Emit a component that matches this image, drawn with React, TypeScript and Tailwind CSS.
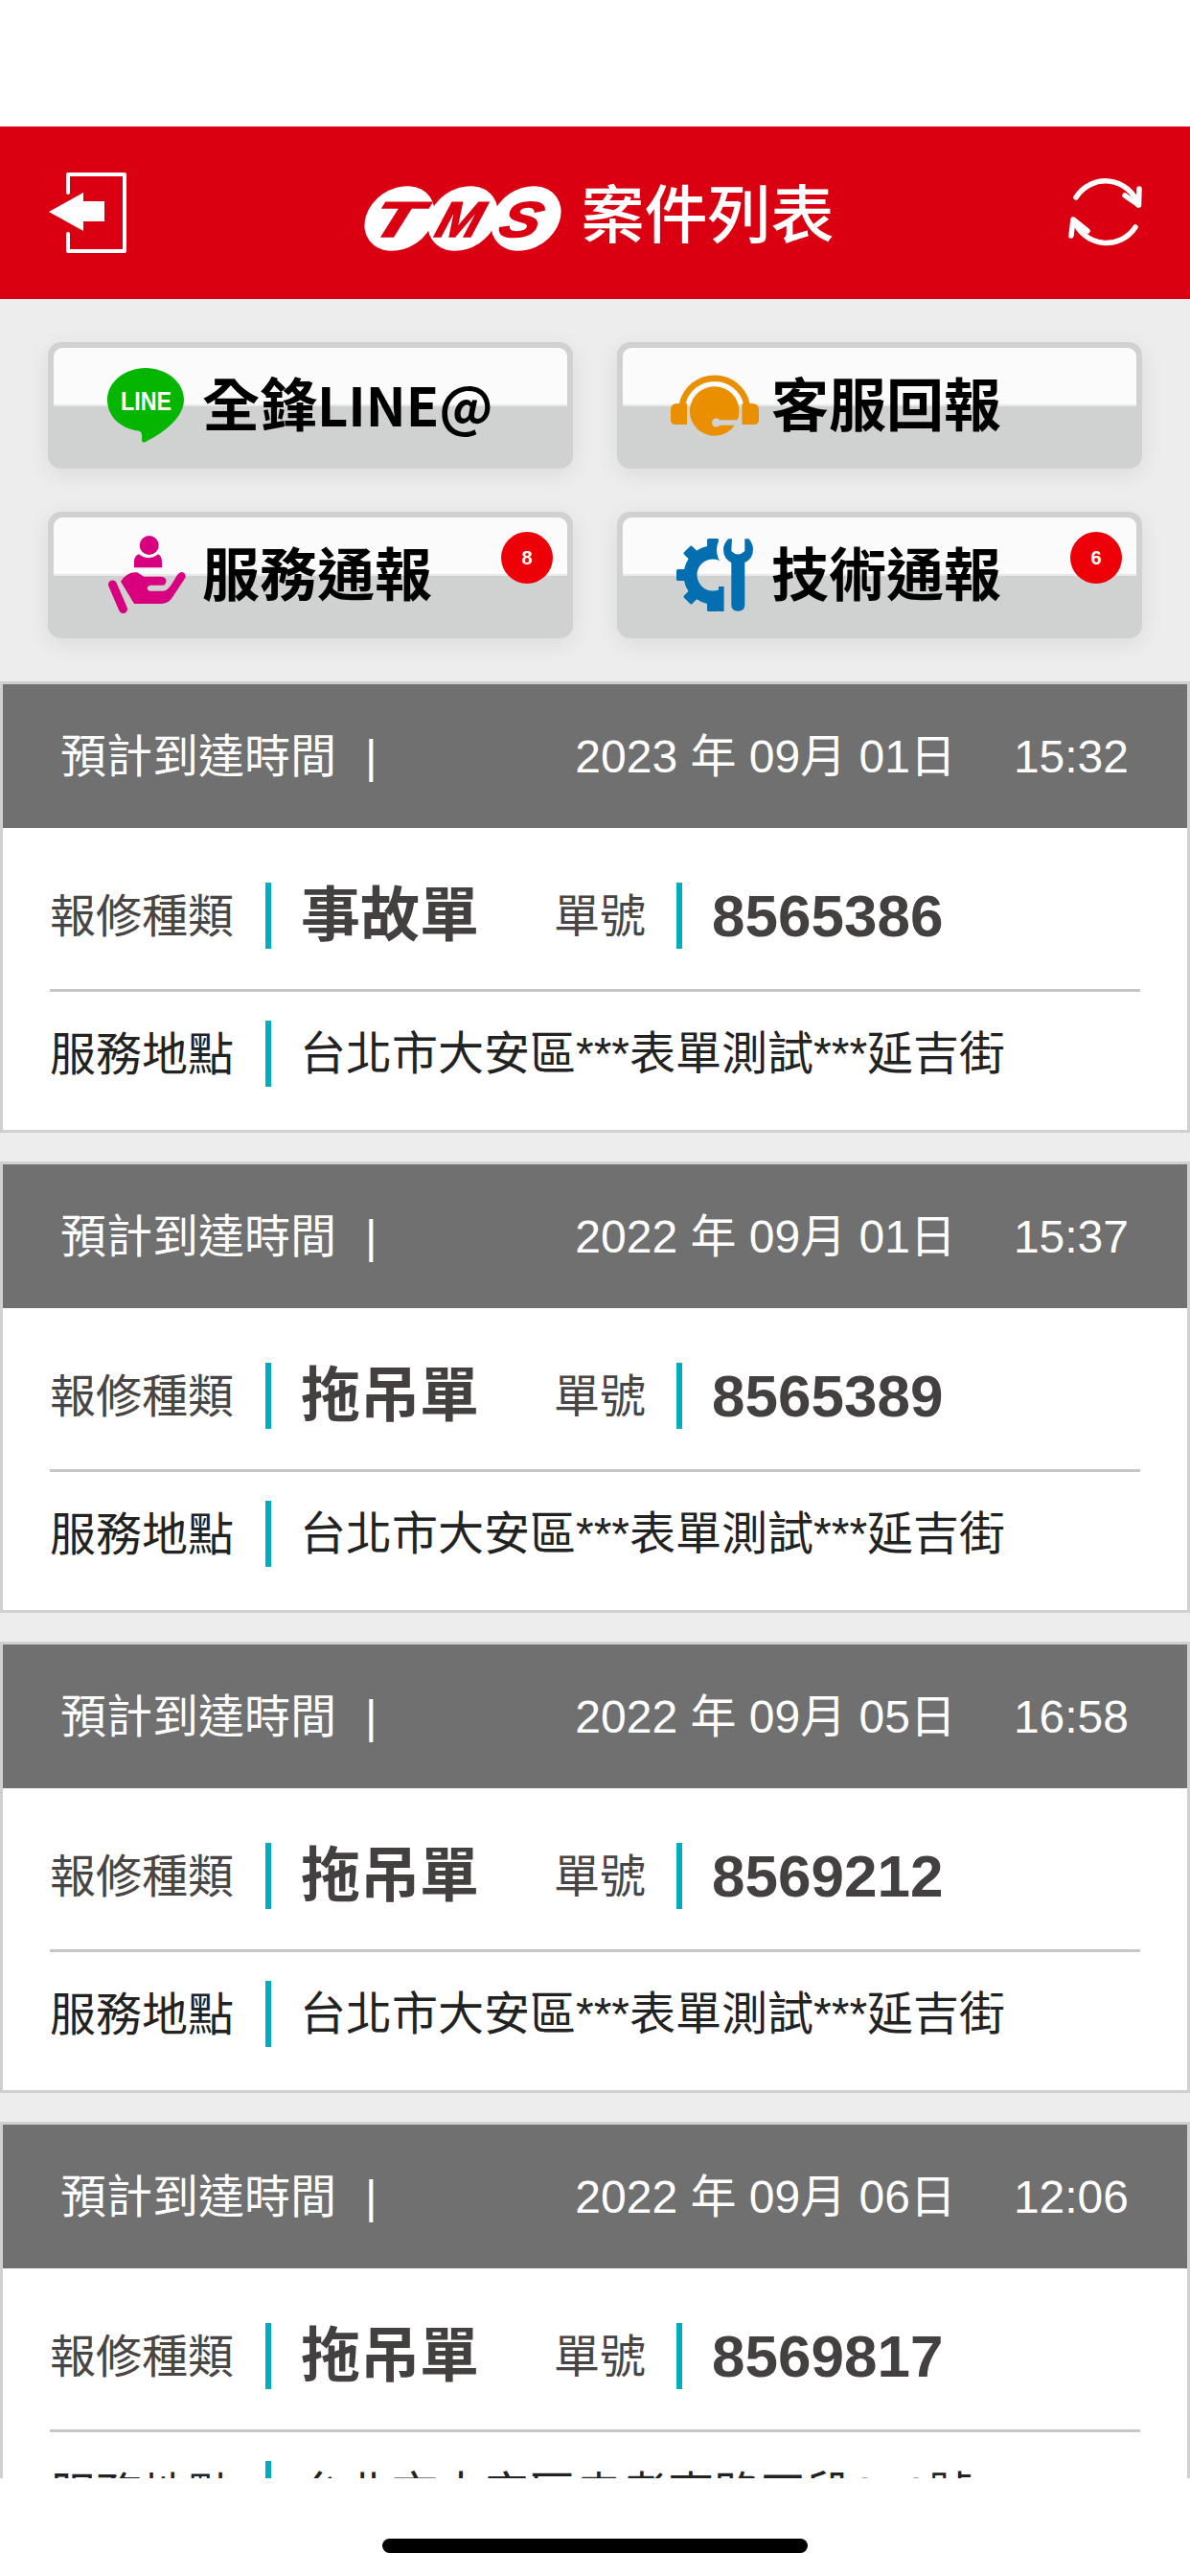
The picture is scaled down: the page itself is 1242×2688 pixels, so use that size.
import React from 'react';

const cases = [
  { date: '2023 年 09月 01日', time: '15:32', type: '事故單', no: '8565386', addr: '台北市大安區***表單測試***延吉街' },
  { date: '2022 年 09月 01日', time: '15:37', type: '拖吊單', no: '8565389', addr: '台北市大安區***表單測試***延吉街' },
  { date: '2022 年 09月 05日', time: '16:58', type: '拖吊單', no: '8569212', addr: '台北市大安區***表單測試***延吉街' },
  { date: '2022 年 09月 06日', time: '12:06', type: '拖吊單', no: '8569817', addr: '台北市大安區忠孝東路四段270號' },
];

function ExitIcon() {
  return (
    <svg width="82" height="84" viewBox="0 0 82 84" fill="none">
      <path d="M21 21V2H80V82H21V64" stroke="#fff" strokeWidth="4" strokeLinecap="round" strokeLinejoin="round" />
      <path d="M1 41L37 21V30H59V51H37V61Z" fill="#fff" />
    </svg>
  );
}

function RefreshIcon() {
  return (
    <svg width="95" height="95" viewBox="0 0 95 95" fill="none" stroke="#fff" strokeWidth="5.5" strokeLinecap="round" strokeLinejoin="round">
      <path d="M16 31A36 36 0 0 1 81 39" />
      <path d="M82 22L81.5 39L67 29" />
      <path d="M78 62A36 36 0 0 1 14 55" />
      <path d="M11 71L13 54L28 66" />
    </svg>
  );
}

function TmsLogo() {
  const letter = "font-['Liberation_Sans'] font-bold italic";
  return (
    <svg width="225" height="76" viewBox="0 0 225 76" className="translate-y-[6px]">
      <ellipse cx="45" cy="38" rx="39" ry="31" transform="rotate(-35 45 38)" fill="#fff" />
      <ellipse cx="111" cy="38" rx="39" ry="31" transform="rotate(-35 111 38)" fill="#fff" />
      <ellipse cx="177" cy="38" rx="39" ry="31" transform="rotate(-35 177 38)" fill="#fff" />
      <g fill="#da0012" stroke="#da0012" strokeWidth="1.5" className={letter} fontSize="52">
        <text transform="translate(12 57) skewX(-18) scale(1.55 1)">T</text>
        <text transform="translate(80 57) skewX(-18) scale(1.05 1)">M</text>
        <text transform="translate(146 57) skewX(-18) scale(1.2 1)">S</text>
      </g>
    </svg>
  );
}

function LineIcon() {
  return (
    <svg width="100" height="100" viewBox="0 0 100 100">
      <path d="M46 11C68 11 86 26 86 44C86 62 66 78 46 88C43 89.500 42 88 42 86C42.500 80 42 77 38 76.500C19 74 6 61 6 44C6 26 24 11 46 11Z" fill="#04b600" />
      <text x="20" y="55" fill="#fff" fontSize="28" textLength="53" lengthAdjust="spacingAndGlyphs" className="font-['Liberation_Sans'] font-bold">LINE</text>
    </svg>
  );
}

function HeadsetIcon() {
  return (
    <svg width="100" height="100" viewBox="0 0 100 100">
      <circle cx="45.700" cy="56" r="25.800" fill="#e98f00" />
      <path d="M47 68H76" stroke="#d0d1d1" strokeWidth="5.500" />
      <circle cx="47.500" cy="68" r="4.500" fill="#d0d1d1" />
      <path d="M12 49A34.500 34.500 0 0 1 79.500 49" fill="none" stroke="#e98f00" strokeWidth="6.500" />
      <path d="M7 48H17V70H5Q0 70 0 65V55Q0 48 7 48Z" fill="#e98f00" />
      <path d="M74.500 48H85Q92 48 92 55V65Q92 70 87 70H74.500Z" fill="#e98f00" />
    </svg>
  );
}

function CareIcon() {
  return (
    <svg width="100" height="100" viewBox="0 0 100 100" fill="#d8007f">
      <circle cx="49.700" cy="19" r="10" />
      <path d="M34 42.300V35Q34.500 30 39 28.300Q49 36 59 28.300Q63 30 63 37V42.300Z" />
      <path d="M11.500 60L22.500 85.500" stroke="#d8007f" strokeWidth="9" strokeLinecap="round" fill="none" />
      <path d="M20 56.700Q27 46 37.300 47.300L44 51.700H62.300Q67.300 52 67.300 56Q67 60.700 64 60.700H50.700Q47 62 48 65Q48.500 66.700 50.700 66.700H64Q69 66.700 74 58.300L79 50Q83 45 86.700 48.500Q88.500 51 87.300 53L74 73.300Q70 80 62.300 80H34Z" />
    </svg>
  );
}

function GearWrenchIcon() {
  const angles = [90, 135, 180, 225, 270];
  return (
    <svg width="100" height="100" viewBox="0 0 100 100">
      <mask id="gear-cut">
        <rect width="100" height="100" fill="#fff" />
        <rect x="55.600" y="0" width="44.400" height="100" fill="#000" />
        <circle cx="70" cy="24" r="22" fill="#000" />
      </mask>
      <g mask="url(#gear-cut)" fill="#036fb0">
        <circle cx="44" cy="50" r="23.500" fill="none" stroke="#036fb0" strokeWidth="14" />
        {angles.map((a) => (
          <rect key={a} x="38" y="12" width="12" height="14" rx="1.500" transform={`rotate(${a - 270} 44 50)`} />
        ))}
        <rect x="50" y="62" width="8" height="26" />
      </g>
      <path d="M60 12.300H64L63.300 25Q70 32 77.300 25V12.300H81.700Q86 18 86 23.300Q86 33 77.300 37V81Q77.300 87.700 70.300 87.700Q63.300 87.700 63.300 81V37Q55 33 55 23.300Q55 18 60 12.300Z" fill="#036fb0" />
    </svg>
  );
}

function ActionButton({ icon, label, suffix, badge }: { icon: React.ReactNode; label: string; suffix?: string; badge?: number }) {
  return (
    <button className="relative flex h-[132px] items-center rounded-[14px] bg-[#d0d1d1] pl-[56px] shadow-[0_6px_24px_rgba(0,0,0,0.08)]">
      <span className="absolute inset-x-[6px] top-[6px] h-[61px] rounded-t-[9px] border-b-2 border-[#e8e8e8] bg-[#fbfbfb]"></span>
      <span className="relative w-[100px] shrink-0">{icon}</span>
      <span className="relative mb-[8px] ml-[5px] text-[60px] leading-none font-bold text-black font-['Noto_Sans_CJK_TC',sans-serif]">
        {label}
        {suffix && <span className="text-[56px]">{suffix}</span>}
      </span>
      {badge !== undefined && (
        <span className="absolute top-[21px] right-[21px] flex h-[54px] w-[54px] items-center justify-center rounded-full bg-[#ee0009] text-[20px] font-bold text-white">
          {badge}
        </span>
      )}
    </button>
  );
}

function CaseCard({ item }: { item: (typeof cases)[number] }) {
  return (
    <div className="mb-[30px] border-[3px] border-[#d0d0d0] bg-white">
      <div className="flex h-[150px] items-center bg-[#707070] pt-[2px] pr-[61px] pl-[60px] text-[48px] leading-none text-white">
        <span>預計到達時間</span>
        <span className="ml-[30px]">|</span>
        <span className="ml-auto">{item.date}</span>
        <span className="ml-[60px]">{item.time}</span>
      </div>
      <div className="flex items-center px-[49px] pt-[57px] pb-[42px] text-[48px] leading-none text-[#4a4545]">
        <span className="w-[192px] pt-[2px]">報修種類</span>
        <span className="mr-[31px] ml-[33px] h-[69px] w-[6px] bg-[#00adbd]"></span>
        <span className="w-[264px] text-[62px] font-bold text-[#444040]">{item.type}</span>
        <span className="w-[96px] pt-[2px]">單號</span>
        <span className="mr-[31px] ml-[32px] h-[69px] w-[6px] bg-[#00adbd]"></span>
        <span className="text-[62px] font-bold text-[#444040]">{item.no}</span>
      </div>
      <div className="mx-[49px] h-[3px] bg-[#c8c5c5]"></div>
      <div className="flex items-center px-[49px] pt-[30px] pb-[45px] text-[48px] leading-none text-[#222]">
        <span className="w-[192px] pt-[2px]">服務地點</span>
        <span className="mr-[30px] ml-[33px] h-[69px] w-[6px] bg-[#00adbd]"></span>
        <span>{item.addr}</span>
      </div>
    </div>
  );
}

export default function App() {
  return (
    <div className="flex h-[2688px] w-[1242px] flex-col overflow-hidden bg-[#ededed] font-['Liberation_Sans','Noto_Sans_CJK_TC',sans-serif]">
      {/* status bar area */}
      <div className="h-[132px] shrink-0 bg-white"></div>

      <header className="grid h-[180px] shrink-0 grid-cols-[1fr_auto_1fr] items-center bg-[#da0012]">
        <div className="ml-[50px] justify-self-start">
          <ExitIcon />
        </div>
        <div className="flex items-center gap-[10px]">
          <TmsLogo />
          <h1 className="pt-[5px] text-[66px] leading-none font-medium text-white">案件列表</h1>
        </div>
        <div className="mr-[40px] justify-self-end">
          <RefreshIcon />
        </div>
      </header>

      <div className="grid shrink-0 grid-cols-2 gap-x-[46px] gap-y-[45px] px-[50px] py-[45px]">
        <ActionButton icon={<LineIcon />} label="全鋒" suffix="LINE@" />
        <ActionButton icon={<HeadsetIcon />} label="客服回報" />
        <ActionButton icon={<CareIcon />} label="服務通報" badge={8} />
        <ActionButton icon={<GearWrenchIcon />} label="技術通報" badge={6} />
      </div>

      <div className="min-h-0 flex-1 overflow-hidden">
        {cases.map((item) => (
          <CaseCard key={item.no} item={item} />
        ))}
      </div>

      {/* home indicator */}
      <div className="flex h-[102px] shrink-0 justify-center bg-white pt-[63px]">
        <div className="h-[15px] w-[444px] rounded-full bg-black"></div>
      </div>
    </div>
  );
}
